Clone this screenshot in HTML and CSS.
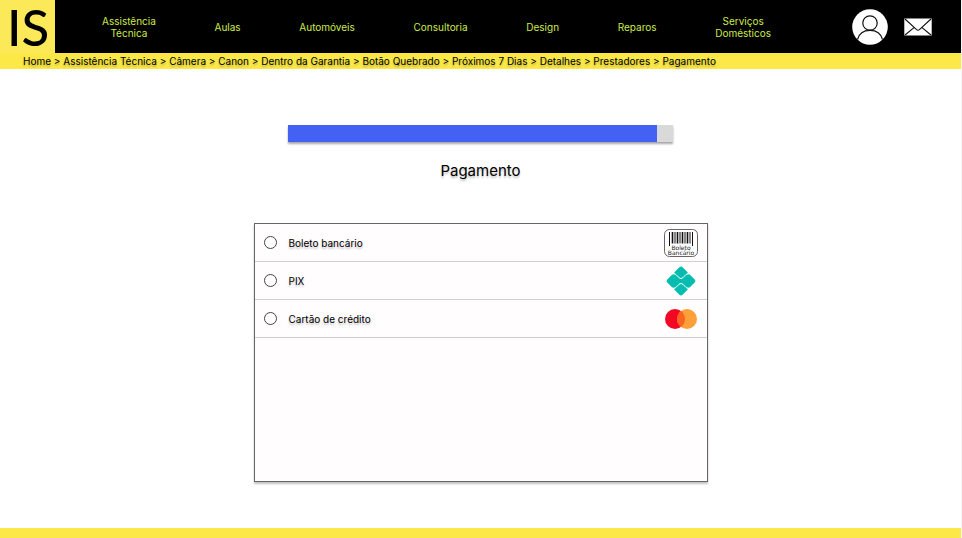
FILE: index.html
```html
<!DOCTYPE html>
<html lang="pt-BR">
<head>
<meta charset="utf-8">
<meta name="viewport" content="width=device-width, initial-scale=1">
<title>Pagamento</title>
<link rel="stylesheet" href="styles.css">
</head>
<body>
<header class="topbar">
  <a class="logo" href="#">IS</a>
  <nav class="menu">
    <a href="#">Assistência<br>Técnica</a>
    <a href="#">Aulas</a>
    <a href="#">Automóveis</a>
    <a href="#">Consultoria</a>
    <a href="#">Design</a>
    <a href="#">Reparos</a>
    <a href="#">Serviços<br>Domésticos</a>
  </nav>
  <div class="actions">
    <a href="#" aria-label="Perfil">
      <svg width="36" height="36" viewBox="0 0 36 36" fill="none" stroke="#111">
        <circle cx="18" cy="18" r="17.8" fill="#fff" stroke="none"/>
        <circle cx="18" cy="14" r="7.2" stroke-width="1.2"/>
        <path d="M5.5 30.5C7 24.500 12 21.300 18 21.300S29 24.500 30.500 30.500" stroke-width="1.2"/>
      </svg>
    </a>
    <a href="#" aria-label="Mensagens">
      <svg width="28" height="18" viewBox="0 0 28 18" fill="none" stroke="#111" stroke-width="1.1">
        <rect x="0.300" y="0.500" width="27.400" height="17" fill="#fff" stroke="none"/>
        <path d="M1 1l11.600 10.600q1.400 1.200 2.800 0L27 1M1 17l9.300-7.600M27 17l-9.300-7.600"/>
      </svg>
    </a>
  </div>
</header>
<nav class="breadcrumb" aria-label="Caminho">
  <a href="#">Home</a> &gt; <a href="#">Assistência Técnica</a> &gt; <a href="#">Câmera</a> &gt; <a href="#">Canon</a> &gt; <a href="#">Dentro da Garantia</a> &gt; <a href="#">Botão Quebrado</a> &gt; <a href="#">Próximos 7 Dias</a> &gt; <a href="#">Detalhes</a> &gt; <a href="#">Prestadores</a> &gt; <a href="#">Pagamento</a>
</nav>
<main class="content">
  <progress class="progress" value="96" max="100" aria-label="Progresso do pedido"></progress>
  <h1 class="title">Pagamento</h1>
  <form class="panel">
    <label class="option">
      <input type="radio" name="pagamento" value="boleto">
      <span class="option-name">Boleto bancário</span>
      <svg width="34" height="30" viewBox="0 0 34 30">
        <rect x="0.500" y="1.500" width="33" height="27" rx="5" fill="#fff" stroke="#555" stroke-width="0.900"/>
        <path d="M5.500 4v14M28.500 4v14" stroke="#111" stroke-width="1"/>
        <path d="M8.500 4v11.500M13.500 4v11.500M18.500 4v11.500M23.500 4v11.500" stroke="#111" stroke-width="1.600"/>
        <path d="M11 4v11.500M16 4v11.500M21 4v11.500M26 4v11.500" stroke="#111" stroke-width="1"/>
        <text class="boleto-text" x="17" y="21.500">Boleto</text>
        <text class="boleto-text" x="17" y="27">Bancário</text>
      </svg>
    </label>
    <label class="option">
      <input type="radio" name="pagamento" value="pix">
      <span class="option-name">PIX</span>
      <svg width="34" height="30" viewBox="0 0 34 30">
        <g transform="translate(17 15) rotate(45)" fill="#04bdb0">
          <rect x="-10.800" y="-10.800" width="10.800" height="10.800" rx="2.200"/>
          <rect x="0" y="-10.800" width="10.800" height="10.800" rx="2.200"/>
          <rect x="-10.800" y="0" width="10.800" height="10.800" rx="2.200"/>
          <rect x="0" y="0" width="10.800" height="10.800" rx="2.200"/>
          <rect x="-8" y="-8" width="16" height="16"/>
        </g>
        <path d="M8.500 7.300Q10.800 7.300 12 8.600L15 11.700Q17 13.600 19 11.700L22 8.600Q23.200 7.300 25.500 7.300M8.500 22.700Q10.800 22.700 12 21.400L15 18.300Q17 16.400 19 18.300L22 21.400Q23.200 22.700 25.500 22.700" fill="none" stroke="#fff" stroke-width="1"/>
      </svg>
    </label>
    <label class="option">
      <input type="radio" name="pagamento" value="cartao">
      <span class="option-name">Cartão de crédito</span>
      <svg width="34" height="30" viewBox="0 0 34 30">
        <circle cx="11" cy="15" r="10" fill="#f40725"/>
        <circle cx="23" cy="15" r="10" fill="#fea03a"/>
        <path d="M17 7a10 10 0 0 1 0 16a10 10 0 0 1 0-16Z" fill="#fc6320"/>
      </svg>
    </label>
  </form>
</main>
<footer class="footer"></footer>
</body>
</html>
```
FILE: styles.css
```css
* {
  box-sizing: border-box;
}

body {
  margin: 0;
  min-height: 100vh;
  display: flex;
  flex-direction: column;
  border-right: 1px solid #f6f6f6;
  background: #fff;
  color: #000;
  font-family: Inter, "Liberation Sans", sans-serif;
  font-size: 10px;
}

a {
  color: inherit;
  text-decoration: none;
}

svg {
  display: block;
  flex: none;
}

.topbar {
  display: flex;
  align-items: stretch;
  height: 53px;
  background: #000;
}

.logo {
  width: 55px;
  padding-left: 7px;
  background: #fce959;
  color: #000;
  font-family: Lato, "Open Sans", sans-serif;
  font-size: 51px;
  font-weight: 500;
  line-height: 53px;
}

.menu {
  flex: 1;
  display: flex;
  align-items: center;
  justify-content: space-between;
  padding: 0 81px 0 47px;
  color: #cdea4a;
  line-height: 12px;
  text-align: center;
}

.actions {
  display: flex;
  align-items: center;
  gap: 16px;
  padding-right: 29px;
}

.breadcrumb {
  padding: 0 23px;
  background: #fce947;
  line-height: 16px;
  text-shadow: 0 2px 2px rgba(0, 0, 0, 0.25);
}

.content {
  flex: 1;
  display: flex;
  flex-direction: column;
  align-items: center;
  padding: 56px 0 46px;
}

.progress {
  appearance: none;
  width: 40%;
  height: 17px;
  border: 0;
  background: #d9d9d9;
  box-shadow: 0 2px 2px rgba(0, 0, 0, 0.35);
}

.progress::-webkit-progress-bar {
  background: #d9d9d9;
}

.progress::-webkit-progress-value {
  background: #4361f2;
}

.title {
  margin: 19px 0 42px;
  font-size: 15px;
  font-weight: 400;
  line-height: 20px;
  text-shadow: 0 2px 2px rgba(0, 0, 0, 0.25);
}

.panel {
  flex: 1;
  width: 50%;
  max-width: 454px;
  border: 1px solid #666;
  background: #fffdfe;
  box-shadow: 0 2px 2px rgba(0, 0, 0, 0.25);
}

.option {
  display: flex;
  align-items: center;
  gap: 12px;
  height: 38px;
  padding: 0 9px;
  border-bottom: 1px solid #d0d0d0;
}

.option input {
  appearance: none;
  width: 13px;
  height: 13px;
  margin: 0;
  border: 1px solid #444;
  border-radius: 50%;
  background: #fff;
}

.option input:checked {
  background: #4361f2;
}

.option-name {
  flex: 1;
  text-shadow: 0 2px 2px rgba(0, 0, 0, 0.25);
}

.boleto-text {
  font-family: "DejaVu Sans", sans-serif;
  font-size: 6px;
  text-anchor: middle;
  fill: #222;
}

.footer {
  height: 10px;
  background: #fce947;
}
```
